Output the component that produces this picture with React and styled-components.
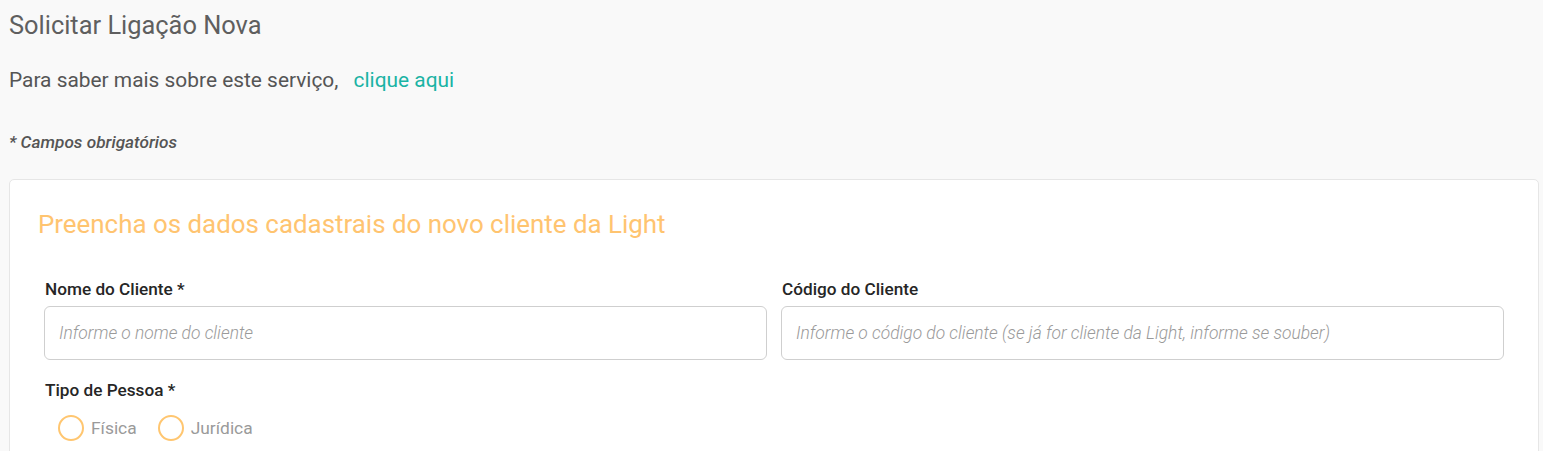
import React from "react";
import styled, { createGlobalStyle } from "styled-components";

const Global = createGlobalStyle`
  html, body { margin: 0; padding: 0; background: #f9f9f9; }
  body { font-family: Roboto, "Noto Sans", Arial, sans-serif; }
  * { box-sizing: border-box; }
`;

const Page = styled.div`
  padding: 11px 4px 0 9px;
  min-height: 451px;
  background: #f9f9f9;
`;

const Title = styled.h1`
  margin: 0;
  font-size: 25.4px;
  line-height: 28px;
  font-weight: 400;
  color: #5f5f5f;
`;

const Intro = styled.p`
  margin: 29px 0 0;
  font-size: 20.9px;
  line-height: 24px;
  color: #555;
`;

const Link = styled.a`
  color: #1ab3a4;
  text-decoration: none;
  margin-left: 10px;
`;

const Required = styled.p`
  margin: 40px 0 0;
  font-size: 17.2px;
  line-height: 20px;
  font-style: italic;
  font-weight: 500;
  color: #555;
`;

const Card = styled.section`
  margin-top: 27px;
  background: #fff;
  border: 1px solid #e6e6e6;
  border-radius: 5px;
  padding: 29px 34px 0 34px;
  min-height: 300px;
`;

const CardTitle = styled.h2`
  margin: 0 0 0 -6px;
  font-size: 25.9px;
  line-height: 30px;
  font-weight: 400;
  color: #ffc470;
`;

const Grid = styled.div`
  display: grid;
  grid-template-columns: 1fr 1fr;
  column-gap: 14px;
  margin-top: 40px;
`;

const Field = styled.div`
  display: flex;
  flex-direction: column;
`;

const Label = styled.label`
  font-size: 17.2px;
  line-height: 20px;
  font-weight: 500;
  color: #262626;
  margin-left: 1px;
`;

const Input = styled.input`
  margin-top: 7px;
  height: 54px;
  border: 1px solid #cfcfcf;
  border-radius: 6px;
  padding: 0 14px;
  font-family: inherit;
  font-size: 17.4px;
  background: #fff;
  outline: none;
  &::placeholder {
    color: #9a9a9a;
    font-style: italic;
    font-weight: 300;
  }
`;

const Group = styled.div`
  margin-top: 20px;
`;

const Radios = styled.div`
  display: flex;
  align-items: center;
  gap: 21px;
  margin: 15px 0 0 14px;
`;

const RadioOption = styled.label`
  display: flex;
  align-items: center;
  gap: 7px;
  font-size: 17.4px;
  color: #9a9a9a;
`;

const Circle = styled.span`
  width: 26px;
  height: 26px;
  border-radius: 50%;
  border: 2px solid #ffc670;
  display: inline-block;
`;

export default function App() {
  return (
    <>
      <Global />
      <Page>
        <Title>Solicitar Ligação Nova</Title>
        <Intro>
          Para saber mais sobre este serviço, <Link href="#">clique aqui</Link>
        </Intro>
        <Required>* Campos obrigatórios</Required>
        <Card>
          <CardTitle>Preencha os dados cadastrais do novo cliente da Light</CardTitle>
          <Grid>
            <Field>
              <Label>Nome do Cliente *</Label>
              <Input placeholder="Informe o nome do cliente" />
            </Field>
            <Field>
              <Label>Código do Cliente</Label>
              <Input placeholder="Informe o código do cliente (se já for cliente da Light, informe se souber)" />
            </Field>
          </Grid>
          <Group>
            <Label>Tipo de Pessoa *</Label>
            <Radios>
              <RadioOption>
                <Circle />
                Física
              </RadioOption>
              <RadioOption>
                <Circle />
                Jurídica
              </RadioOption>
            </Radios>
          </Group>
        </Card>
      </Page>
    </>
  );
}
